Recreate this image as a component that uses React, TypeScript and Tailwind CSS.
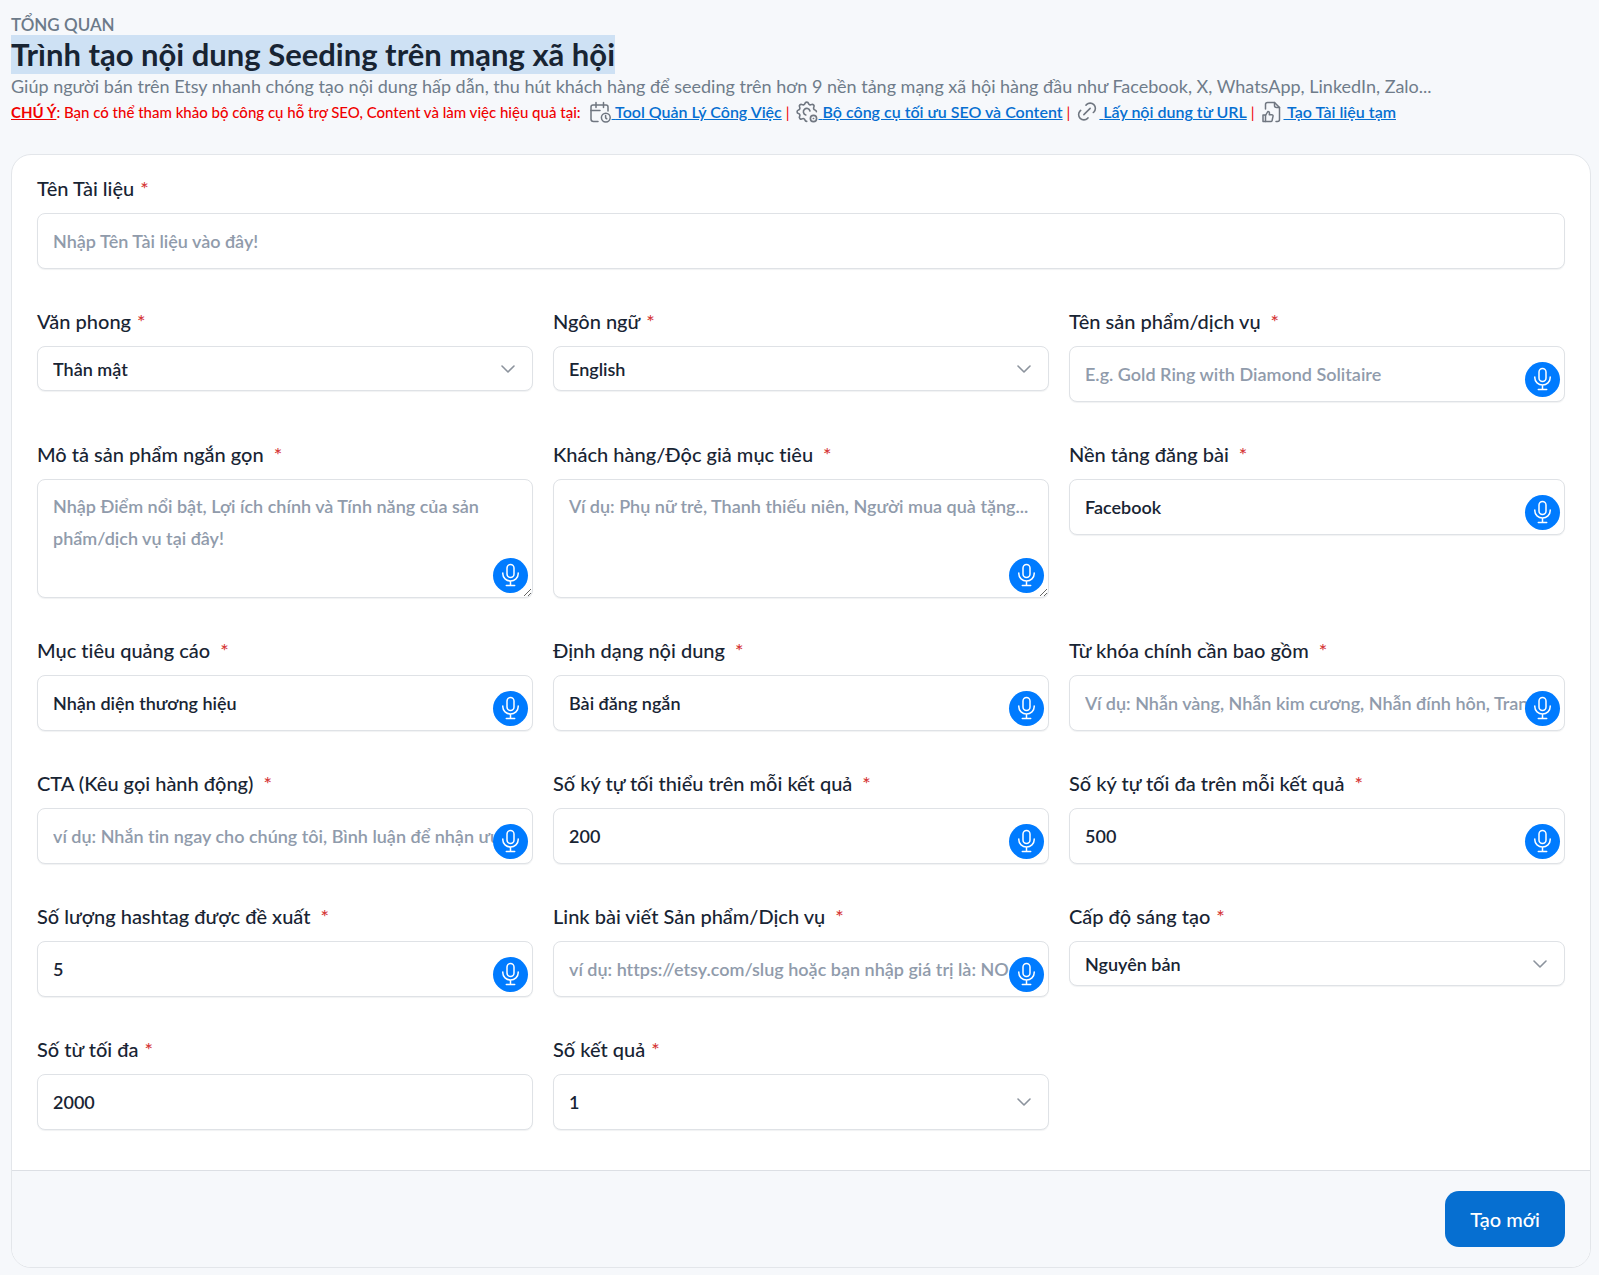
import type { ReactNode } from "react"
import clsx from "clsx"

type Kind = "input" | "textarea" | "select"

interface Field {
  id: string
  label: string
  kind: Kind
  placeholder?: string
  value?: string
  options?: string[]
  voice?: boolean
  tall?: boolean
}

const fields: Field[] = [
  { id: "tone", label: "Văn phong", kind: "select", options: ["Thân mật"] },
  { id: "language", label: "Ngôn ngữ", kind: "select", options: ["English"] },
  {
    id: "product",
    label: "Tên sản phẩm/dịch vụ",
    kind: "input",
    placeholder: "E.g. Gold Ring with Diamond Solitaire",
    voice: true,
  },
  {
    id: "description",
    label: "Mô tả sản phẩm ngắn gọn",
    kind: "textarea",
    placeholder: "Nhập Điểm nổi bật, Lợi ích chính và Tính năng của sản phẩm/dịch vụ tại đây!",
    voice: true,
  },
  {
    id: "audience",
    label: "Khách hàng/Độc giả mục tiêu",
    kind: "textarea",
    placeholder: "Ví dụ: Phụ nữ trẻ, Thanh thiếu niên, Người mua quà tặng...",
    voice: true,
  },
  { id: "platform", label: "Nền tảng đăng bài", kind: "input", value: "Facebook", voice: true },
  { id: "goal", label: "Mục tiêu quảng cáo", kind: "input", value: "Nhận diện thương hiệu", voice: true },
  { id: "format", label: "Định dạng nội dung", kind: "input", value: "Bài đăng ngắn", voice: true },
  {
    id: "keywords",
    label: "Từ khóa chính cần bao gồm",
    kind: "input",
    placeholder: "Ví dụ: Nhẫn vàng, Nhẫn kim cương, Nhẫn đính hôn, Trang",
    voice: true,
  },
  {
    id: "cta",
    label: "CTA (Kêu gọi hành động)",
    kind: "input",
    placeholder: "ví dụ: Nhắn tin ngay cho chúng tôi, Bình luận để nhận ưu",
    voice: true,
  },
  { id: "min", label: "Số ký tự tối thiểu trên mỗi kết quả", kind: "input", value: "200", voice: true },
  { id: "max", label: "Số ký tự tối đa trên mỗi kết quả", kind: "input", value: "500", voice: true },
  { id: "hashtags", label: "Số lượng hashtag được đề xuất", kind: "input", value: "5", voice: true },
  {
    id: "link",
    label: "Link bài viết Sản phẩm/Dịch vụ",
    kind: "input",
    placeholder: "ví dụ: https://etsy.com/slug hoặc bạn nhập giá trị là: NO",
    voice: true,
  },
  { id: "creativity", label: "Cấp độ sáng tạo", kind: "select", options: ["Nguyên bản"] },
  { id: "words", label: "Số từ tối đa", kind: "input", value: "2000" },
  { id: "results", label: "Số kết quả", kind: "select", options: ["1"], tall: true },
]

const control =
  "block w-full rounded-lg border border-[#dfe2e6] bg-white px-[15px] text-lg font-semibold text-[#182433] shadow-[0_1px_1px_rgba(24,36,51,0.06)] placeholder:text-[#909bab] placeholder:opacity-100 focus:border-[#83b7e8] focus:outline-none"

function Icon({ children, viewBox = "0 0 22 22" }: { children: ReactNode; viewBox?: string }) {
  return (
    <svg
      viewBox={viewBox}
      className="mr-px h-[22px] w-[22px] shrink-0 text-[#6f7680]"
      fill="none"
      stroke="currentColor"
      strokeWidth="1.5"
      strokeLinecap="round"
      strokeLinejoin="round"
      aria-hidden="true"
    >
      {children}
    </svg>
  )
}

function CalendarIcon() {
  return (
    <Icon>
      <path d="M9 20.5H4.5A2.500 2.500 0 0 1 2 18V6a2 2 0 0 1 2-2h13a2 2 0 0 1 2 2v4" />
      <path d="M7 1.5v5M14.5 1.5v5M2 9.5h9" />
      <circle cx="16.8" cy="16.6" r="4.4" />
      <path d="M16.6 14.6v2.2l1.2 1" />
    </Icon>
  )
}

function GearIcon() {
  return (
    <Icon viewBox="2 2 20.5 20.5">
      <path d="M12.003 21c-.732 .001 -1.465 -.438 -1.678 -1.317a1.724 1.724 0 0 0 -2.573 -1.066c-1.543 .94 -3.31 -.826 -2.37 -2.37a1.724 1.724 0 0 0 -1.065 -2.572c-1.756 -.426 -1.756 -2.924 0 -3.35a1.724 1.724 0 0 0 1.066 -2.573c-.94 -1.543 .826 -3.31 2.37 -2.37c1 .608 2.296 .07 2.572 -1.065c.426 -1.756 2.924 -1.756 3.35 0a1.724 1.724 0 0 0 2.573 1.066c1.543 -.94 3.31 .826 2.37 2.37a1.724 1.724 0 0 0 1.065 2.572c.886 .215 1.325 .957 1.318 1.694" />
      <path d="M15 11.3a3.1 3.1 0 1 0 -3.9 3.7" />
      <circle cx="18.3" cy="18.3" r="2.9" />
      <path d="M18.2 18.3h.2" />
    </Icon>
  )
}

function LinkIcon() {
  return (
    <Icon viewBox="1.5 2 21 21">
      <path d="M9 15l6-6" />
      <path d="M11 6l.463-.536a5 5 0 0 1 7.071 7.072l-.534.464" />
      <path d="M13 18l-.397.534a5.068 5.068 0 0 1-7.127 0a4.972 4.972 0 0 1 0-7.071l.524-.463" />
    </Icon>
  )
}

function FileLikeIcon() {
  return (
    <Icon>
      <path d="M4.5 8V3.5a2 2 0 0 1 2-2h7l5 5v12a2 2 0 0 1-2 2H15" />
      <path d="M13.5 1.5v3a2 2 0 0 0 2 2h3" />
      <path d="M2 14h2.5v6.5H2z" />
      <path d="M4.5 14.5l2.3-4c1.6 0 1.9 1 1.5 3.2h2.4c1 0 1.5.7 1.3 1.6l-.8 3.9c-.2.8-.7 1.3-1.5 1.3H4.5" />
    </Icon>
  )
}

const tools = [
  { name: "Tool Quản Lý Công Việc", icon: <CalendarIcon /> },
  { name: "Bộ công cụ tối ưu SEO và Content", icon: <GearIcon /> },
  { name: "Lấy nội dung từ URL", icon: <LinkIcon /> },
  { name: "Tạo Tài liệu tạm", icon: <FileLikeIcon /> },
]

function MicButton({ label }: { label: string }) {
  return (
    <button
      type="button"
      aria-label={label}
      className="absolute right-[5px] bottom-[5px] h-[35px] w-[35px] rounded-full bg-[#007bff] text-white hover:bg-[#0069d9]"
    >
      <svg viewBox="0 0 35 35" fill="none" stroke="currentColor" strokeWidth="1.5" strokeLinecap="round" aria-hidden="true">
        <rect x="14" y="6.5" width="7" height="13" rx="3.5" />
        <path d="M9.8 15v.8a7.700 7.200 0 0 0 15.400 0V15M17.5 23v4.5M13.3 27.5h8.4" />
      </svg>
    </button>
  )
}

function FormField({ field }: { field: Field }) {
  const { id, label, kind, placeholder, value, options = [], voice, tall } = field

  return (
    <div>
      <label htmlFor={id} className="mb-3 block text-xl/[26px] font-medium">
        {label}
        <span className={clsx("text-[#d63939]", voice ? "ml-2.5" : "ml-1.5")}>*</span>
      </label>
      <div className="relative">
        {kind === "input" && (
          <input id={id} defaultValue={value} placeholder={placeholder} className={clsx(control, "h-14")} />
        )}
        {kind === "textarea" && (
          <textarea id={id} placeholder={placeholder} className={clsx(control, "h-[119px] resize py-2.5 leading-8")} />
        )}
        {kind === "select" && (
          <>
            <select id={id} className={clsx(control, "appearance-none", tall ? "h-14" : "h-[45px]")}>
              {options.map((option) => (
                <option key={option}>{option}</option>
              ))}
            </select>
            <svg
              viewBox="0 0 14 8"
              className="pointer-events-none absolute inset-y-0 right-[18px] my-auto h-2 w-3.5 text-[#8c939d]"
              fill="none"
              stroke="currentColor"
              strokeWidth="1.6"
              strokeLinecap="round"
              strokeLinejoin="round"
              aria-hidden="true"
            >
              <path d="M1 1l6 6 6-6" />
            </svg>
          </>
        )}
        {voice && <MicButton label={label} />}
      </div>
    </div>
  )
}

export default function App() {
  return (
    <main className="min-h-screen bg-[#f6f8fb] pt-3.5 pr-2 pb-[7px] pl-[11px] font-['Lato',sans-serif] text-[#182433] [font-variant-ligatures:none]">
      <header className="mb-7">
        <div className="text-[17px]/[21px] font-semibold text-[#6c7a89] uppercase">Tổng quan</div>
        <h1 className="w-fit bg-[#cee1f4] text-[31px]/[39px] font-bold">Trình tạo nội dung Seeding trên mạng xã hội</h1>
        <p className="text-lg/6 text-[#6f7c8a]">
          Giúp người bán trên Etsy nhanh chóng tạo nội dung hấp dẫn, thu hút khách hàng để seeding trên hơn 9 nền tảng
          mạng xã hội hàng đầu như Facebook, X, WhatsApp, LinkedIn, Zalo...
        </p>
        <div className="flex flex-wrap items-center gap-x-1 text-[15px]/7 text-[#f00000]">
          <p className="mr-1 font-medium">
            <strong className="underline">CHÚ Ý</strong>: Bạn có thể tham khảo bộ công cụ hỗ trợ SEO, Content và làm việc
            hiệu quả tại:
          </p>
          {tools.map((tool, i) => (
            <span key={tool.name} className="flex items-center gap-1.5">
              {i > 0 && <span>|</span>}
              <a href="#" className="flex items-center text-base/7 font-semibold text-[#066fd1]">
                {tool.icon}
                <span className="underline">&nbsp;{tool.name}</span>
              </a>
            </span>
          ))}
        </div>
      </header>

      <form className="overflow-hidden rounded-[20px] border border-[#e3e6ea] bg-white">
        <div className="px-[25px] pt-5 pb-10">
          <FormField field={{ id: "title", label: "Tên Tài liệu", kind: "input", placeholder: "Nhập Tên Tài liệu vào đây!" }} />
          <div className="mt-[39px] grid grid-cols-3 gap-x-5 gap-y-[39px]">
            {fields.map((field) => (
              <FormField key={field.id} field={field} />
            ))}
          </div>
        </div>
        <div className="flex justify-end border-t border-[#dcdfe4] bg-[#f6f8fb] px-[25px] py-5">
          <button
            type="submit"
            className="h-14 rounded-[14px] bg-[#066fd1] px-[25px] text-xl font-medium text-white hover:bg-[#0563bb]"
          >
            Tạo mới
          </button>
        </div>
      </form>
    </main>
  )
}
